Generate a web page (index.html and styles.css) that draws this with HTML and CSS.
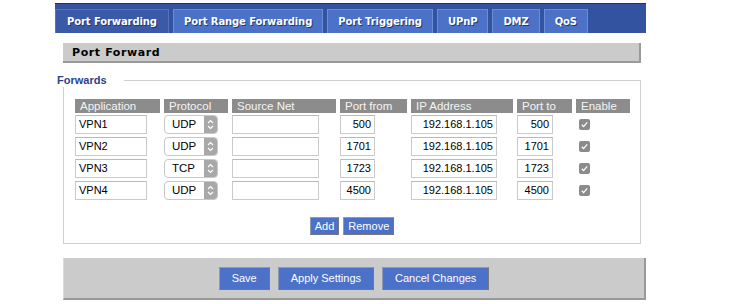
FILE: index.html
```html
<!DOCTYPE html>
<html>
<head>
<meta charset="utf-8">
<link rel="stylesheet" href="styles.css">
</head>
<body>
<div class="page">
  <nav class="tabs">
    <span class="tab active">Port Forwarding</span>
    <span class="tab">Port Range Forwarding</span>
    <span class="tab">Port Triggering</span>
    <span class="tab">UPnP</span>
    <span class="tab">DMZ</span>
    <span class="tab">QoS</span>
  </nav>

  <h2 class="section-title">Port Forward</h2>

  <fieldset class="forwards">
    <legend>Forwards</legend>
    <div class="grid">
      <div class="th">Application</div>
      <div class="th">Protocol</div>
      <div class="th">Source Net</div>
      <div class="th">Port from</div>
      <div class="th">IP Address</div>
      <div class="th">Port to</div>
      <div class="th">Enable</div>

      <div class="field app">VPN1</div>
      <div class="select"><span class="sel-text">UDP</span><span class="stepper"><svg width="7" height="11" viewBox="0 0 7 11"><path d="M1 4 L3.5 1.5 L6 4 M1 7 L3.5 9.5 L6 7" fill="none" stroke="#fff" stroke-width="1.2"/></svg></span></div>
      <div class="field src"></div>
      <div class="field num pf">500</div>
      <div class="field num ip">192.168.1.105</div>
      <div class="field num pt">500</div>
      <div class="cb"><svg width="11" height="11" viewBox="0 0 11 11"><rect width="11" height="11" rx="2" fill="#8b8b8b"/><path d="M2.8 5.8 L4.6 7.6 L8.2 3.4" fill="none" stroke="#fff" stroke-width="1.3"/></svg></div>

      <div class="field app">VPN2</div>
      <div class="select"><span class="sel-text">UDP</span><span class="stepper"><svg width="7" height="11" viewBox="0 0 7 11"><path d="M1 4 L3.5 1.5 L6 4 M1 7 L3.5 9.5 L6 7" fill="none" stroke="#fff" stroke-width="1.2"/></svg></span></div>
      <div class="field src"></div>
      <div class="field num pf">1701</div>
      <div class="field num ip">192.168.1.105</div>
      <div class="field num pt">1701</div>
      <div class="cb"><svg width="11" height="11" viewBox="0 0 11 11"><rect width="11" height="11" rx="2" fill="#8b8b8b"/><path d="M2.8 5.8 L4.6 7.6 L8.2 3.4" fill="none" stroke="#fff" stroke-width="1.3"/></svg></div>

      <div class="field app">VPN3</div>
      <div class="select"><span class="sel-text">TCP</span><span class="stepper"><svg width="7" height="11" viewBox="0 0 7 11"><path d="M1 4 L3.5 1.5 L6 4 M1 7 L3.5 9.5 L6 7" fill="none" stroke="#fff" stroke-width="1.2"/></svg></span></div>
      <div class="field src"></div>
      <div class="field num pf">1723</div>
      <div class="field num ip">192.168.1.105</div>
      <div class="field num pt">1723</div>
      <div class="cb"><svg width="11" height="11" viewBox="0 0 11 11"><rect width="11" height="11" rx="2" fill="#8b8b8b"/><path d="M2.8 5.8 L4.6 7.6 L8.2 3.4" fill="none" stroke="#fff" stroke-width="1.3"/></svg></div>

      <div class="field app">VPN4</div>
      <div class="select"><span class="sel-text">UDP</span><span class="stepper"><svg width="7" height="11" viewBox="0 0 7 11"><path d="M1 4 L3.5 1.5 L6 4 M1 7 L3.5 9.5 L6 7" fill="none" stroke="#fff" stroke-width="1.2"/></svg></span></div>
      <div class="field src"></div>
      <div class="field num pf">4500</div>
      <div class="field num ip">192.168.1.105</div>
      <div class="field num pt">4500</div>
      <div class="cb"><svg width="11" height="11" viewBox="0 0 11 11"><rect width="11" height="11" rx="2" fill="#8b8b8b"/><path d="M2.8 5.8 L4.6 7.6 L8.2 3.4" fill="none" stroke="#fff" stroke-width="1.3"/></svg></div>
    </div>
    <div class="row-actions">
      <button class="btn small">Add</button>
      <button class="btn small">Remove</button>
    </div>
  </fieldset>

  <div class="submit-bar">
    <button class="btn">Save</button>
    <button class="btn">Apply Settings</button>
    <button class="btn">Cancel Changes</button>
  </div>
</div>
</body>
</html>
```
FILE: styles.css
```css
html, body {
  margin: 0;
  padding: 0;
  background: #fff;
}
body {
  font-family: "Liberation Sans", Arial, sans-serif;
  font-size: 11px;
  color: #000;
}
.page {
  width: 591px;
  margin-left: 55px;
  padding-top: 3px;
}
.tabs {
  height: 29px;
  background: #3353a0;
  border-top: 1px solid #23304f;
  display: flex;
  align-items: flex-end;
  gap: 4px;
}
.tab {
  box-sizing: border-box;
  height: 24px;
  padding: 0 10px;
  display: flex;
  align-items: center;
  justify-content: center;
  background: #4b72c6;
  border: 1px solid #6a8fd8;
  border-bottom: none;
  color: #fff;
  font-family: "DejaVu Sans", Verdana, sans-serif;
  font-weight: bold;
  font-size: 10px;
  letter-spacing: -0.1px;
  text-shadow: 1px 1px 0 #22356e;
}
.tab.active {
  background: #3a59a7;
  border-color: #5574bd;
  padding: 0 11px;
}
.section-title {
  box-sizing: border-box;
  margin: 10px 0 0 8px;
  width: 578px;
  height: 20px;
  padding: 0 0 0 9px;
  display: flex;
  align-items: center;
  background: #cbcbcb;
  border-right: 2px solid #9a9a9a;
  border-bottom: 2px solid #9a9a9a;
  font-family: "DejaVu Sans", Verdana, sans-serif;
  font-size: 11px;
  font-weight: bold;
  letter-spacing: 0.6px;
}
.forwards {
  box-sizing: border-box;
  margin: 11px 0 0 8px;
  width: 578px;
  padding: 0 0 8px 11px;
  border: 1px solid #cfcfcf;
  min-width: 0;
}
.forwards legend {
  margin-left: -18px;
  padding: 0 17px 0 0;
  color: #2d3f8e;
  font-weight: bold;
  font-size: 11px;
  line-height: 13px;
}
.grid {
  margin-top: 13px;
  display: grid;
  grid-template-columns: 85px 64px 104px 67px 102px 55px 54px;
  grid-auto-rows: 19px;
  grid-template-rows: 12px;
  column-gap: 4px;
  row-gap: 3px;
}
.th {
  background: #8c8c8c;
  color: #f4f4f4;
  font-size: 11.5px;
  padding-left: 5px;
  white-space: nowrap;
  overflow: hidden;
  margin-top: -1px;
  height: 14px;
  line-height: 14px;
}
.field {
  box-sizing: border-box;
  height: 19px;
  border: 1px solid #cacaca;
  border-top-color: #b9b9b9;
  background: #fff;
  padding: 0 3px;
  line-height: 17px;
  font-size: 11px;
  white-space: nowrap;
}
.field.app { width: 72px; }
.field.src { width: 87px; }
.field.num { text-align: right; }
.field.pf { width: 35px; }
.field.ip { width: 86px; }
.field.pt { width: 36px; }
.select {
  box-sizing: border-box;
  width: 54px;
  height: 19px;
  border: 1px solid #c8c8c8;
  border-radius: 4px;
  display: flex;
  align-items: stretch;
  overflow: hidden;
  background: #fff;
}
.sel-text {
  flex: 1;
  padding-left: 7px;
  line-height: 17px;
  font-size: 11.5px;
}
.stepper {
  width: 13px;
  background: #a8a8a8;
  display: flex;
  align-items: center;
  justify-content: center;
}
.cb {
  padding: 4px 0 0 3px;
  line-height: 0;
}
.row-actions {
  display: flex;
  justify-content: center;
  gap: 4px;
  margin-top: 17px;
  padding-right: 11px;
}
.btn {
  box-sizing: border-box;
  margin: 0;
  height: 23px;
  padding: 0 12px;
  background: #4b72c8;
  color: #fff;
  border: 1px solid #8c9bb8;
  border-right-color: #777;
  border-bottom-color: #777;
  font-family: "Liberation Sans", Arial, sans-serif;
  font-size: 11px;
  line-height: 21px;
  cursor: pointer;
}
.btn.small {
  height: 18px;
  line-height: 16px;
  padding: 0 4px;
}
.submit-bar {
  box-sizing: border-box;
  margin: 14px 0 0 8px;
  width: 583px;
  height: 42px;
  background: #cbcbcb;
  border-left: 1px solid #dcdcdc;
  border-right: 2px solid #9a9a9a;
  border-bottom: 2px solid #9a9a9a;
  display: flex;
  justify-content: center;
  align-items: center;
  gap: 8px;
}
```
